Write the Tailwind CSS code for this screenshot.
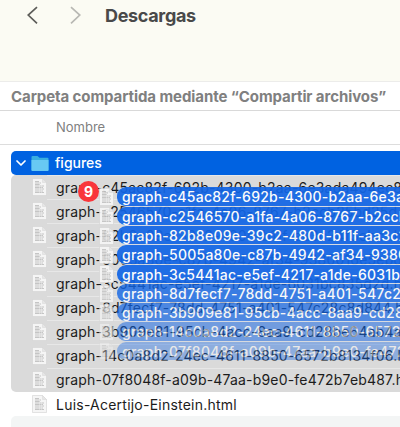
<!DOCTYPE html>
<html lang="es"><head><meta charset="utf-8"><title>Descargas</title>
<script src="https://cdn.jsdelivr.net/npm/@tailwindcss/browser@4"></script></head>
<body class="relative w-[400px] h-[427px] overflow-hidden bg-white font-['Inter',sans-serif] whitespace-nowrap">
<svg class="hidden"><symbol id="doc" viewBox="0 0 15 18"><path d="M.5.5h10l4 4v13H.5z" fill="#f5f5f5" stroke="#d2d2d2" stroke-width=".6"/><path d="M10.5.5v4h4z" fill="#e6e6e6" stroke="#d2d2d2" stroke-width=".4"/><path d="M3 3.5h4M3 5h6M3 6.5h5M3 8h9M3 9.5h8M3 11h9M3 13h8M3 14.5h9" stroke="#b0b0b0" stroke-width=".7" stroke-dasharray="4 .4 2 .3"/></symbol></svg>
<header class="h-[82px] bg-[#fbfbf3] border-b border-[#ececea] flex items-start pt-[5px] pl-[27px]">
<svg class="w-[11px] h-5" viewBox="0 0 11 20" fill="none" stroke="#5d5d59" stroke-width="1.7"><path d="M10 2.2 1.2 10 10 18.3"/></svg>
<svg class="w-[11px] h-5 ml-[32px]" viewBox="0 0 11 20" fill="none" stroke="#b8b8b3" stroke-width="1.7"><path d="M1 2.2 9.8 10 1 18.3"/></svg>
<h1 class="ml-[24px] text-[18px] leading-[21px] font-bold text-[#494949] tracking-[-0.33px]">Descargas</h1>
</header>
<div class="h-[29px] border-b border-[#d9d9d9] pl-[11px] text-[15px] leading-[29px] font-bold text-[#808080] tracking-[-0.08px]">Carpeta compartida mediante “Compartir archivos”</div>
<div class="h-[34px] border-b border-[#dddddd] pl-[56px] text-[13px] leading-[32px] text-[#808080]">Nombre</div>
<main class="pt-[6px] pl-[11px]">
<div class="h-[24px] bg-[#0062e1] rounded-l-[5px] flex items-center text-white">
<svg class="w-[10px] h-[8px] ml-[5px]" viewBox="0 0 10 8" fill="none" stroke="white" stroke-width="1.7" stroke-linecap="round" stroke-linejoin="round"><path d="m1 2 4 4 4-4"/></svg>
<svg class="w-[18px] h-[17px] ml-[5px]" viewBox="0 0 18 17"><path d="M.5 2q0-1 1-1h5l2 1.7h8q1 0 1 1V15q0 1-1 1H1.5q-1 0-1-1z" fill="#39aee0"/><path d="M.5 5h17v10q0 1-1 1h-15q-1 0-1-1z" fill="#68c8f3"/></svg>
<span class="ml-[6px] text-[14px] leading-[24px] font-medium">figures</span></div>
<div id="rows" class="h-[217px] bg-[#dadada] rounded-l-[5px] overflow-hidden"></div>
<div class="h-[24px] flex items-center pl-[21px]"><svg class="shrink-0 w-[15px] h-[18px]"><use href="#doc"/></svg><span class="ml-[9px] text-[14px] text-[#1c1c1c] tracking-[0.23px]">Luis-Acertijo-Einstein.html</span></div>
<div class="h-[24px] bg-[#f3f5f5] rounded-l-[5px]"></div>
</main>
<div id="drag" class="absolute left-[99px] right-0 top-[187.4px] overflow-hidden"></div>
<div class="absolute left-[78px] top-[181px] size-[21px] rounded-full bg-[#f9363b] text-white text-[14px] font-bold leading-[21px] text-center">9</div>
<script>
const names=["c45ac82f-692b-4300-b2aa-6e3ada494ec8","c2546570-a1fa-4a06-8767-b2ccb25bd25d","82b8e09e-39c2-480d-b11f-aa3c24f3ebc1","5005a80e-c87b-4942-af34-9380016e5ebd","3c5441ac-e5ef-4217-a1de-6031bc835d2d","8d7fecf7-78dd-4751-a401-547c28c8d844","3b909e81-95cb-4acc-8aa9-cd28be64ab4a","14c0a8d2-24ec-4611-8850-6572b8134f06","07f8048f-a09b-47aa-b9e0-fe472b7eb487"];
const alpha=[.93,.93,.93,.93,.93,.8,.7,.52,.38];
rows.innerHTML=names.map((n,i)=>`<div class="relative h-[24.11px] flex items-center pl-[21px]"><i class="absolute left-[36px] right-0 top-0 h-px bg-[#e7e7e7]"></i><svg class="shrink-0 w-[15px] h-[18px]"><use href="#doc"/></svg><span class="relative ml-[9px] text-[14px] text-[#1c1c1c] tracking-[0.19px]">graph-${n}.html</span></div>`).join('');
drag.innerHTML=names.map((n,i)=>`<div class="h-[19.3px] flex items-center" style="opacity:${alpha[i]}"><svg class="shrink-0 w-[15px] h-[18px]"><use href="#doc"/></svg><div class="shrink-0 ml-[3px] w-[340px] h-[19.3px] pl-[5px] rounded-l-[9px] bg-[#1265e5] border-b border-[#d5dbe4] text-white text-[14px] leading-[19px] font-medium tracking-[0.25px]">graph-${n}.html</div></div>`).join('');
</script></body></html>
